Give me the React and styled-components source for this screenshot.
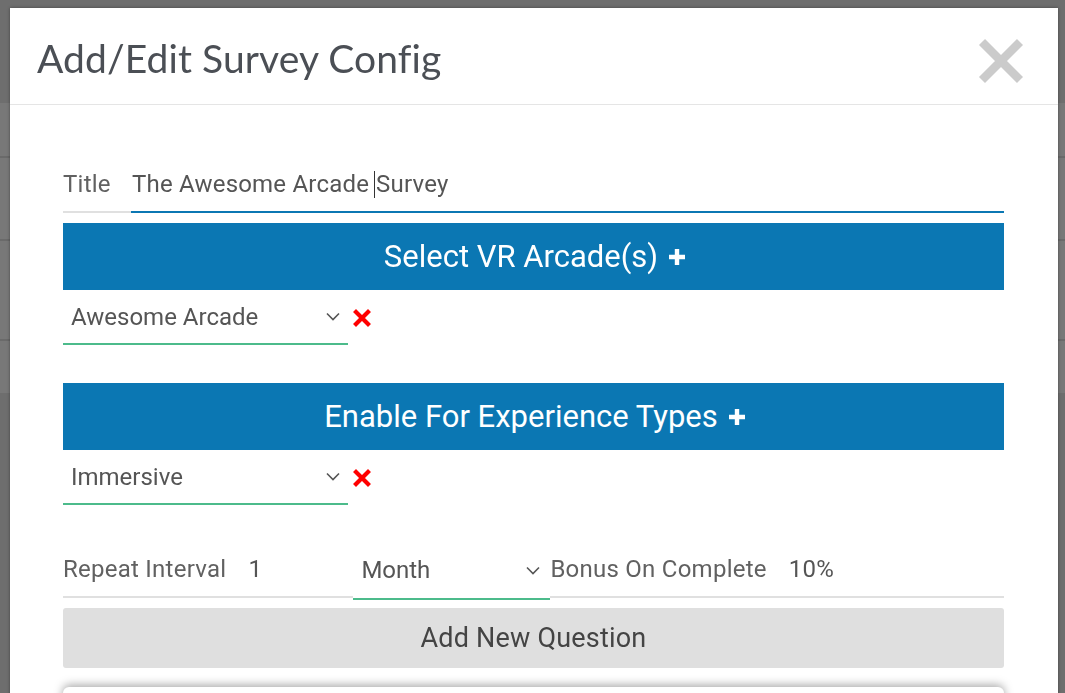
import React from "react";
import styled, { createGlobalStyle } from "styled-components";

const GlobalStyle = createGlobalStyle`
	html, body {
		margin: 0;
		padding: 0;
		width: 100%;
		height: 100%;
		overflow: hidden;
		background: #6e6e6e;
		font-family: Roboto, "Liberation Sans", sans-serif;
	}
`

const Backdrop = styled.div`
	display: flex;
	flex-direction: column;
	width: 100%;
	height: 693px;
`

const BackdropRow = styled.div`
	height: ${p => p.h}px;
	background: ${p => p.dark ? "#6e6e6e" : "#787878"};
	border-bottom: ${p => p.line ? "2px solid #6a6a6a" : "none"};
	flex-shrink: 0;
`

const Modal = styled.div`
	position: fixed;
	top: 8px;
	left: 10px;
	width: 1048px;
	height: 720px;
	background: #fff;
	box-shadow: 0 0 3px rgba(0, 0, 0, 0.4);
	overflow: hidden;
`

const Header = styled.div`
	display: flex;
	align-items: center;
	justify-content: space-between;
	height: 96px;
	padding: 0 33px 0 27px;
	border-bottom: 1px solid #e5e5e5;
`

const HeaderTitle = styled.h2`
	margin: 0;
	padding-top: 3px;
	font-family: Lato, "Open Sans", sans-serif;
	font-weight: 400;
	font-size: 39px;
	letter-spacing: 0.1px;
	color: #4b4f55;
`

const CloseButton = styled.button`
	display: flex;
	padding: 0;
	border: none;
	background: none;
	margin-top: 10px;
	cursor: pointer;
`

const Body = styled.div`
	display: flex;
	flex-direction: column;
	padding: 57px 54px 0 53px;
`

const Field = styled.div`
	display: flex;
	align-items: stretch;
	height: 51px;
`

const Label = styled.div`
	display: flex;
	align-items: center;
	width: ${p => p.w ? `${p.w}px` : "auto"};
	padding: 0 ${p => p.pr || 0}px 5px 0;
	border-bottom: 2px solid #e0e0e0;
	font-size: 24px;
	letter-spacing: 0.25px;
	color: #616161;
	white-space: nowrap;
`

const Value = styled.div`
	display: flex;
	align-items: center;
	flex: ${p => p.grow ? 1 : "none"};
	width: ${p => p.w ? `${p.w}px` : "auto"};
	padding: 0 0 5px 1px;
	border-bottom: 2px solid ${p => p.focus ? "#0b77b3" : "#e0e0e0"};
	font-size: 24px;
	letter-spacing: 0.2px;
	color: #555;
	white-space: nowrap;
`

const Caret = styled.span`
	display: inline-block;
	width: 1px;
	height: 27px;
	background: #333;
	margin: 0 1px 0 5px;
`

const SectionBar = styled.button`
	display: flex;
	align-items: center;
	justify-content: center;
	gap: 9px;
	height: 67px;
	margin-top: ${p => p.mt || 0}px;
	padding: 0 0 0 4px;
	border: none;
	background: #0b77b3;
	color: #fff;
	font-family: Roboto, "Liberation Sans", sans-serif;
	font-size: 31px;
`

const SelectRow = styled.div`
	display: flex;
	align-items: center;
	gap: 5px;
`

const Select = styled.div`
	display: flex;
	align-items: center;
	justify-content: space-between;
	width: ${p => p.w}px;
	height: ${p => p.h || 53}px;
	padding: 0 ${p => p.pr || 8}px ${p => p.pb || 0}px 8px;
	border-bottom: 2px solid #4cbb8b;
	font-size: 24px;
	color: #555;
	box-sizing: content-box;
`

const RepeatRow = styled(Field)`
	margin-top: 42px;
`

const AddButton = styled.button`
	height: 60px;
	margin-top: 10px;
	border: none;
	border-radius: 3px;
	background: #dfdfdf;
	font-family: Roboto, "Liberation Sans", sans-serif;
	font-size: 27px;
	color: #444;
	letter-spacing: 0.2px;
`

const QuestionCard = styled.div`
	height: 80px;
	margin-top: 19px;
	border-radius: 6px;
	background: #fff;
	box-shadow: 0 -2px 10px rgba(0, 0, 0, 0.35);
`

const Chevron = () => (
	<svg width="14" height="9" viewBox="0 0 14 9" fill="none">
		<path d="M1 1.5 L7 7.5 L13 1.5" stroke="#555" strokeWidth="1.6"/>
	</svg>
)

const RemoveIcon = () => (
	<svg width="18" height="18" viewBox="0 0 18 18">
		<path d="M3 3 L15 15 M15 3 L3 15" stroke="#f00" strokeWidth="4.2" strokeLinecap="square"/>
	</svg>
)

const PlusIcon = () => (
	<svg width="20" height="20" viewBox="0 0 20 20">
		<path d="M10 2 V18 M2 10 H18" stroke="#fff" strokeWidth="4.4"/>
	</svg>
)

const CloseIcon = () => (
	<svg width="48" height="48" viewBox="0 0 48 48">
		<path d="M5 5 L43 43 M43 5 L5 43" stroke="#cbcbcb" strokeWidth="8.5"/>
	</svg>
)

const DropdownField = ({value, w = 269}) => (
	<SelectRow>
		<Select w={w}>
			<span>{value}</span>
			<Chevron/>
		</Select>
		<RemoveIcon/>
	</SelectRow>
)

const App = () => {
	return (
		<>
			<GlobalStyle/>
			<Backdrop>
				<BackdropRow h={103} dark/>
				<BackdropRow h={53} line/>
				<BackdropRow h={81} line/>
				<BackdropRow h={98} line/>
				<BackdropRow h={52}/>
				<BackdropRow h={300} dark/>
			</Backdrop>
			<Modal>
				<Header>
					<HeaderTitle>Add/Edit Survey Config</HeaderTitle>
					<CloseButton><CloseIcon/></CloseButton>
				</Header>
				<Body>
					<Field>
						<Label w={68}>Title</Label>
						<Value grow focus>The Awesome Arcade<Caret/>Survey</Value>
					</Field>
					<SectionBar mt={10}>Select VR Arcade(s) <PlusIcon/></SectionBar>
					<DropdownField value="Awesome Arcade"/>
					<SectionBar mt={38}>Enable For Experience Types <PlusIcon/></SectionBar>
					<DropdownField value="Immersive"/>
					<RepeatRow>
						<Label pr={21}>Repeat Interval</Label>
						<Value w={105}>1</Value>
						<Select w={179} h={46} pr={10} pb={5}>
							<span>Month</span>
							<Chevron/>
						</Select>
						<Label pr={21}>Bonus On Complete</Label>
						<Value grow>10%</Value>
					</RepeatRow>
					<AddButton>Add New Question</AddButton>
					<QuestionCard/>
				</Body>
			</Modal>
		</>
	)
}

export default App
